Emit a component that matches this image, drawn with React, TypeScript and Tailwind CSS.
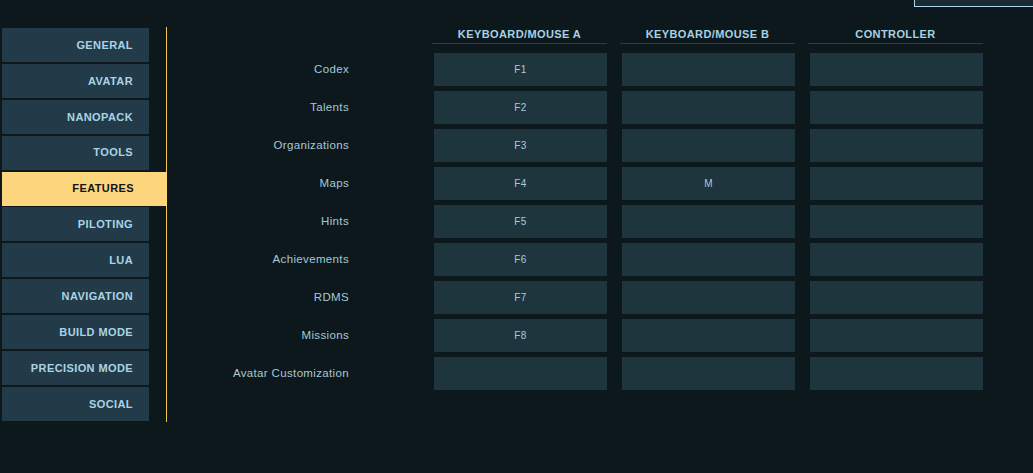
import React from 'react'

const categories = [
  'GENERAL',
  'AVATAR',
  'NANOPACK',
  'TOOLS',
  'FEATURES',
  'PILOTING',
  'LUA',
  'NAVIGATION',
  'BUILD MODE',
  'PRECISION MODE',
  'SOCIAL',
]

const columns = ['KEYBOARD/MOUSE A', 'KEYBOARD/MOUSE B', 'CONTROLLER']

const bindings: { label: string; keys: string[] }[] = [
  { label: 'Codex', keys: ['F1', '', ''] },
  { label: 'Talents', keys: ['F2', '', ''] },
  { label: 'Organizations', keys: ['F3', '', ''] },
  { label: 'Maps', keys: ['F4', 'M', ''] },
  { label: 'Hints', keys: ['F5', '', ''] },
  { label: 'Achievements', keys: ['F6', '', ''] },
  { label: 'RDMS', keys: ['F7', '', ''] },
  { label: 'Missions', keys: ['F8', '', ''] },
  { label: 'Avatar Customization', keys: ['', '', ''] },
]

export default function App() {
  const active = 'FEATURES'

  return (
    <div
      className="relative flex h-[473px] w-full overflow-hidden bg-[#0d181d]"
      style={{ fontFamily: '"Liberation Sans", Arial, sans-serif' }}
    >
      {/* corner of a panel above */}
      <div className="absolute right-0 top-0 h-[7px] w-[119px] border-b border-l border-[#a6d6ea] bg-[#1b2a32]" />

      {/* Sidebar */}
      <div className="ml-[2px] mt-[27px] h-[395px] w-[165px] border-r border-[#f2c64f] pt-px">
        <div className="flex h-[393px] flex-col justify-between">
          {categories.map((c) =>
            c === active ? (
              <div
                key={c}
                className="-mr-px flex h-[34px] items-center justify-end bg-[#fcd57d] pr-[33px] text-[11px] font-bold tracking-[0.4px] text-[#141414]"
              >
                {c}
              </div>
            ) : (
              <div
                key={c}
                className="flex h-[34px] w-[147px] items-center justify-end bg-[#233a48] pr-[16px] text-[11px] font-bold tracking-[0.4px] text-[#a9d4e6]"
              >
                {c}
              </div>
            )
          )}
        </div>
      </div>

      {/* Bindings */}
      <div className="mt-[27px] flex flex-col">
        <div className="flex gap-[13px] pl-[265px]">
          {columns.map((col) => (
            <div
              key={col}
              className="h-[17px] w-[175px] border-b border-[#2a3c44] text-center text-[11px] font-bold leading-[14px] tracking-[0.4px] text-[#a6d2e2]"
            >
              {col}
            </div>
          ))}
        </div>

        <div className="mt-[9px] flex flex-col gap-[5px]">
          {bindings.map((b) => (
            <div key={b.label} className="flex h-[33px] items-center">
              <div className="w-[182px] text-right text-[11.5px] tracking-[0.35px] text-[#a5c9d5]">
                {b.label}
              </div>
              <div className="ml-[85px] flex gap-[15px]">
                {b.keys.map((k, i) => (
                  <div
                    key={i}
                    className="flex h-[33px] w-[173px] items-center justify-center bg-[#1e353e] text-[10px] tracking-[0.3px] text-[#a7ccd9]"
                  >
                    {k}
                  </div>
                ))}
              </div>
            </div>
          ))}
        </div>
      </div>
    </div>
  )
}
